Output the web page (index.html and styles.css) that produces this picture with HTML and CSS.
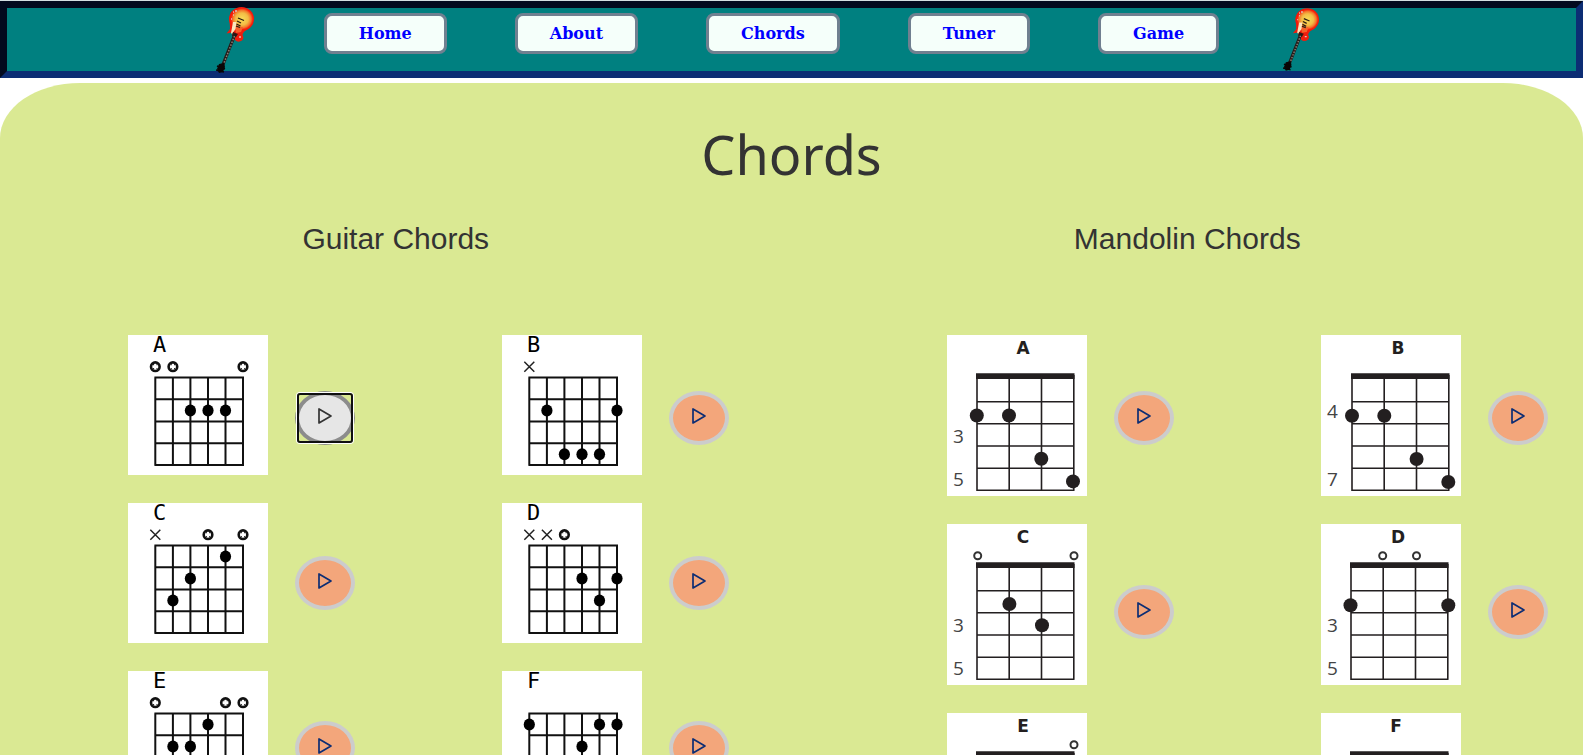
FILE: index.html
```html
<!DOCTYPE html>
<html lang="en">
<head>
<meta charset="utf-8">
<meta name="viewport" content="width=device-width, initial-scale=1">
<title>Chords</title>
<link rel="stylesheet" href="styles.css">
</head>
<body>
<svg class="defs" aria-hidden="true">
  <defs>
    <radialGradient id="burst" cx="0.52" cy="0.5" r="0.5">
      <stop offset="0" stop-color="#f8dc58"/>
      <stop offset="0.5" stop-color="#f2bc45"/>
      <stop offset="0.72" stop-color="#f47a2c"/>
      <stop offset="0.88" stop-color="#f81c0c"/>
      <stop offset="1" stop-color="#ee1808"/>
    </radialGradient>
    <symbol id="guitar" viewBox="0 0 38 66">
      <path d="M13.500 10 L14 22 L10.500 26.500 L16 25.500 Q16 28 18 29 L19 33 Q22 36 26 33.500 Q28.500 31 26.500 28 Q26.500 25 33 21 Z" fill="#f01c0c"/>
      <ellipse cx="25.500" cy="12" rx="12.500" ry="12" fill="url(#burst)"/>
      <path d="M19 20 L27 20 L25 25 L20 26 Z" fill="#f4612a"/>
      <path d="M17 15 L20.500 15 L19.500 22 L16 27 L15 26 Z" fill="#fbe6bd"/>
      <path d="M22 11 L28 13.500 M21 14 L25 16 M20.500 17 L24.500 19 M20 19 L24 20.500" stroke="#2a1a12" stroke-width="1.300"/>
      <path d="M17 25 L22 27 L20 30 L16 29 Z" fill="#3a1712"/>
      <path d="M19 27 L6 60" stroke="#251a18" stroke-width="3.200"/>
      <path d="M18.500 29 L8 56" stroke="#8b8178" stroke-width="1.500" stroke-dasharray="1.500 1.500"/>
      <path d="M3 57 L8 56 L9 60 L7 65 L3 66 L1 62 Z" fill="#0a0606"/>
      <path d="M1 59 L9 62 M0 63 L8 65" stroke="#0a0606" stroke-width="1.500"/>
      <path d="M17 5 h1 M19 4 h2 M17 8 h1 M15 12 h1 M23 30 h2" stroke="#d9c4bd" stroke-width="1.500"/>
    </symbol>
    <symbol id="play" viewBox="0 0 16 18">
      <path d="M2 2 V16 L14 9 Z" fill="none" stroke="currentColor" stroke-width="1.700" stroke-linejoin="round"/>
    </symbol>
    <symbol id="frets6" viewBox="0 0 140 140">
      <path d="M27.300 42.600V130M44.900 42.600V130M62.400 42.600V130M80 42.600V130M97.500 42.600V130M115 42.600V130M26.400 42.600H116M26.400 64.300H116M26.400 86.400H116M26.400 108.300H116M26.400 130H116" fill="none" stroke="#111" stroke-width="2"/>
    </symbol>
    <symbol id="frets4" viewBox="0 0 140 161">
      <path d="M29 38.300H127.500V44H29Z" fill="#231f20"/>
      <path d="M30 40V155.300M62.200 40V155.300M94.500 40V155.300M126.800 40V155.300M29.200 66.700H127.500M29.200 88.700H127.500M29.200 111H127.500M29.200 133.300H127.500M29.200 155.300H127.500" fill="none" stroke="#231f20" stroke-width="1.600"/>
    </symbol>
    <symbol id="open6" viewBox="0 0 12 12" overflow="visible"><circle cx="6" cy="6" r="4.300" fill="#fff" stroke="#111" stroke-width="2.600"/><path d="M3.800 4h1M7.200 4h1M3.800 8h1M7.200 8h1" stroke="#111" stroke-width="1.200"/></symbol>
    <symbol id="mute6" viewBox="0 0 12 12"><path d="M1 1 L11 11 M11 1 L1 11" stroke="#222" stroke-width="1.500"/></symbol>
  </defs>
</svg>

<header class="site-header">
  <nav class="nav" aria-label="Main">
    <svg class="guitar guitar-large" aria-hidden="true"><use href="#guitar"/></svg>
    <div class="links">
      <a class="nav-link" href="#home">Home</a>
      <a class="nav-link" href="#about">About</a>
      <a class="nav-link" href="#chords">Chords</a>
      <a class="nav-link" href="#tuner">Tuner</a>
      <a class="nav-link" href="#game">Game</a>
    </div>
    <svg class="guitar" aria-hidden="true"><use href="#guitar"/></svg>
  </nav>
</header>

<main class="content">
  <h1 class="title">Chords</h1>
  <div class="instruments">
    <section class="instrument">
      <h2 class="subtitle">Guitar Chords</h2>
      <div class="chords chords-guitar">
        <div class="set">
          <div class="charts">
            <svg class="chart" viewBox="0 0 140 140" role="img" aria-label="Guitar A chord">
              <text class="pixel-name" x="25" y="17">A</text><use href="#frets6" width="140" height="140"/>
              <use href="#open6" x="21.300" y="25.700" width="12" height="12"/><use href="#open6" x="38.900" y="25.700" width="12" height="12"/><use href="#open6" x="109" y="25.700" width="12" height="12"/>
              <ellipse cx="62.400" cy="75.400" rx="5.600" ry="6"/><ellipse cx="80" cy="75.400" rx="5.600" ry="6"/><ellipse cx="97.500" cy="75.400" rx="5.600" ry="6"/>
            </svg>
            <svg class="chart" viewBox="0 0 140 140" role="img" aria-label="Guitar C chord">
              <text class="pixel-name" x="25" y="17">C</text><use href="#frets6" width="140" height="140"/>
              <use href="#mute6" x="21.300" y="25.700" width="12" height="12"/><use href="#open6" x="74" y="25.700" width="12" height="12"/><use href="#open6" x="109" y="25.700" width="12" height="12"/>
              <ellipse cx="97.500" cy="53.400" rx="5.600" ry="6"/><ellipse cx="62.400" cy="75.400" rx="5.600" ry="6"/><ellipse cx="44.900" cy="97.400" rx="5.600" ry="6"/>
            </svg>
            <svg class="chart" viewBox="0 0 140 140" role="img" aria-label="Guitar E chord">
              <text class="pixel-name" x="25" y="17">E</text><use href="#frets6" width="140" height="140"/>
              <use href="#open6" x="21.300" y="25.700" width="12" height="12"/><use href="#open6" x="91.500" y="25.700" width="12" height="12"/><use href="#open6" x="109" y="25.700" width="12" height="12"/>
              <ellipse cx="80" cy="53.400" rx="5.600" ry="6"/><ellipse cx="44.900" cy="75.400" rx="5.600" ry="6"/><ellipse cx="62.400" cy="75.400" rx="5.600" ry="6"/>
            </svg>
          </div>
          <div class="players">
            <button class="play is-active" type="button" aria-label="Play guitar A"><svg class="play-icon"><use href="#play"/></svg></button>
            <button class="play" type="button" aria-label="Play guitar C"><svg class="play-icon"><use href="#play"/></svg></button>
            <button class="play" type="button" aria-label="Play guitar E"><svg class="play-icon"><use href="#play"/></svg></button>
          </div>
        </div>
        <div class="set">
          <div class="charts">
            <svg class="chart" viewBox="0 0 140 140" role="img" aria-label="Guitar B chord">
              <text class="pixel-name" x="25" y="17">B</text><use href="#frets6" width="140" height="140"/>
              <use href="#mute6" x="21.300" y="25.700" width="12" height="12"/>
              <ellipse cx="44.900" cy="75.400" rx="5.600" ry="6"/><ellipse cx="115" cy="75.400" rx="5.600" ry="6"/><ellipse cx="62.400" cy="119.300" rx="5.600" ry="6"/><ellipse cx="80" cy="119.300" rx="5.600" ry="6"/><ellipse cx="97.500" cy="119.300" rx="5.600" ry="6"/>
            </svg>
            <svg class="chart" viewBox="0 0 140 140" role="img" aria-label="Guitar D chord">
              <text class="pixel-name" x="25" y="17">D</text><use href="#frets6" width="140" height="140"/>
              <use href="#mute6" x="21.300" y="25.700" width="12" height="12"/><use href="#mute6" x="38.900" y="25.700" width="12" height="12"/><use href="#open6" x="56.400" y="25.700" width="12" height="12"/>
              <ellipse cx="80" cy="75.400" rx="5.600" ry="6"/><ellipse cx="115" cy="75.400" rx="5.600" ry="6"/><ellipse cx="97.500" cy="97.400" rx="5.600" ry="6"/>
            </svg>
            <svg class="chart" viewBox="0 0 140 140" role="img" aria-label="Guitar F chord">
              <text class="pixel-name" x="25" y="17">F</text><use href="#frets6" width="140" height="140"/>
              <ellipse cx="27.300" cy="53.400" rx="5.600" ry="6"/><ellipse cx="97.500" cy="53.400" rx="5.600" ry="6"/><ellipse cx="115" cy="53.400" rx="5.600" ry="6"/><ellipse cx="80" cy="75.400" rx="5.600" ry="6"/><ellipse cx="44.900" cy="97.400" rx="5.600" ry="6"/><ellipse cx="62.400" cy="97.400" rx="5.600" ry="6"/>
            </svg>
          </div>
          <div class="players">
            <button class="play" type="button" aria-label="Play guitar B"><svg class="play-icon"><use href="#play"/></svg></button>
            <button class="play" type="button" aria-label="Play guitar D"><svg class="play-icon"><use href="#play"/></svg></button>
            <button class="play" type="button" aria-label="Play guitar F"><svg class="play-icon"><use href="#play"/></svg></button>
          </div>
        </div>
      </div>
    </section>

    <section class="instrument">
      <h2 class="subtitle">Mandolin Chords</h2>
      <div class="chords chords-mandolin">
        <div class="set">
          <div class="charts">
            <svg class="chart chart-tall" viewBox="0 0 140 161" role="img" aria-label="Mandolin A chord">
              <text class="chord-name" x="76" y="19">A</text><use href="#frets4" width="140" height="161"/>
              <circle cx="29.800" cy="80.500" r="7"/><circle cx="62" cy="80.500" r="7"/><circle cx="94.300" cy="123.700" r="7"/><circle cx="126" cy="146.400" r="7"/>
              <text class="fret" x="6" y="108">3</text><text class="fret" x="6" y="151">5</text>
            </svg>
            <svg class="chart chart-tall" viewBox="0 0 140 161" role="img" aria-label="Mandolin C chord">
              <text class="chord-name" x="76" y="19">C</text><use href="#frets4" width="140" height="161"/>
              <circle class="open" cx="30.700" cy="31.700" r="3.500"/><circle class="open" cx="127" cy="31.700" r="3.500"/>
              <circle cx="62.400" cy="80" r="7"/><circle cx="95" cy="101.300" r="7"/>
              <text class="fret" x="6" y="108">3</text><text class="fret" x="6" y="151">5</text>
            </svg>
            <svg class="chart chart-tall" viewBox="0 0 140 161" role="img" aria-label="Mandolin E chord">
              <text class="chord-name" x="76" y="19">E</text><use href="#frets4" width="140" height="161"/>
              <circle class="open" cx="127" cy="31.700" r="3.500"/>
            </svg>
          </div>
          <div class="players">
            <button class="play" type="button" aria-label="Play mandolin A"><svg class="play-icon"><use href="#play"/></svg></button>
            <button class="play" type="button" aria-label="Play mandolin C"><svg class="play-icon"><use href="#play"/></svg></button>
            <button class="play" type="button" aria-label="Play mandolin E"><svg class="play-icon"><use href="#play"/></svg></button>
          </div>
        </div>
        <div class="set">
          <div class="charts">
            <svg class="chart chart-tall" viewBox="0 0 140 161" role="img" aria-label="Mandolin B chord">
              <text class="chord-name" x="77" y="19">B</text><use href="#frets4" x="1" width="140" height="161"/>
              <circle cx="31" cy="80.800" r="7"/><circle cx="63.300" cy="80.800" r="7"/><circle cx="95.600" cy="124" r="7"/><circle cx="127.300" cy="147" r="7"/>
              <text class="fret" x="6" y="83">4</text><text class="fret" x="6" y="151">7</text>
            </svg>
            <svg class="chart chart-tall" viewBox="0 0 140 161" role="img" aria-label="Mandolin D chord">
              <text class="chord-name" x="77" y="19">D</text><use href="#frets4" width="140" height="161"/>
              <circle class="open" cx="61.700" cy="31.700" r="3.500"/><circle class="open" cx="95.500" cy="31.700" r="3.500"/>
              <circle cx="29.500" cy="81.300" r="7"/><circle cx="127.300" cy="81.300" r="7"/>
              <text class="fret" x="6" y="108">3</text><text class="fret" x="6" y="151">5</text>
            </svg>
            <svg class="chart chart-tall" viewBox="0 0 140 161" role="img" aria-label="Mandolin F chord">
              <text class="chord-name" x="75" y="19">F</text><use href="#frets4" width="140" height="161"/>
            </svg>
          </div>
          <div class="players">
            <button class="play" type="button" aria-label="Play mandolin B"><svg class="play-icon"><use href="#play"/></svg></button>
            <button class="play" type="button" aria-label="Play mandolin D"><svg class="play-icon"><use href="#play"/></svg></button>
            <button class="play" type="button" aria-label="Play mandolin F"><svg class="play-icon"><use href="#play"/></svg></button>
          </div>
        </div>
      </div>
    </section>
  </div>
</main>
</body>
</html>
```
FILE: styles.css
```css
* {
  box-sizing: border-box;
}

body {
  display: flex;
  flex-direction: column;
  height: 100vh;
  margin: 0;
  border-top: 1px solid #d3dfe2;
  background: #fff;
  color: #333;
  font-family: "Liberation Sans", Arial, sans-serif;
}

.defs {
  position: absolute;
  width: 0;
  height: 0;
}

.site-header {
  flex: none;
  height: 77px;
  margin-bottom: 5px;
  border: 7px solid;
  border-color: #020a1e #0c2d74 #0c2d74 #020a1e;
  background: #008080;
}

.nav {
  display: flex;
  justify-content: center;
  align-items: flex-start;
  padding-right: 48px;
}

.links {
  display: flex;
  gap: 68px;
  padding: 5px 64px 0 70px;
}

.nav-link {
  padding: 6px 32px 5px;
  border: 3px solid slategray;
  border-radius: 8px;
  background: #f5fffa;
  color: #00f;
  font: bold 16px/24px Georgia, "DejaVu Serif", serif;
  text-decoration: none;
}

.guitar {
  flex: none;
  width: 36px;
  height: 63px;
}

.guitar-large {
  width: 38px;
  height: 66px;
  margin-top: -1px;
}

.content {
  flex: 1;
  min-height: 0;
  overflow-y: auto;
  scrollbar-width: none;
  border-radius: 80px 80px 0 0 / 55px 55px 0 0;
  background: #dae993;
}

.title {
  margin: 35px 0 0;
  font: 400 54px/72px "Noto Sans", sans-serif;
  text-align: center;
}

.instruments {
  display: grid;
  grid-template-columns: 1fr 1fr;
}

.subtitle {
  margin: 33px 0 80px;
  font-size: 30px;
  font-weight: 400;
  line-height: 32px;
  text-align: center;
}

.chords {
  display: grid;
}

.chords-guitar {
  grid-template-columns: 128fr 374fr 290fr;
}

.chords-mandolin {
  grid-template-columns: 155fr 374fr 262fr;
}

.chords .set:first-child {
  grid-column: 2;
}

.set {
  display: flex;
  gap: 27px;
}

.charts {
  display: flex;
  flex-direction: column;
  gap: 28px;
}

.chart {
  display: block;
  overflow: visible;
  width: 140px;
  height: 140px;
  background: #fff;
  fill: #000;
}

.chart-tall {
  height: 161px;
  fill: #231f20;
}

.pixel-name {
  font: 22px "DejaVu Sans Mono", monospace;
}

.chord-name {
  font: bold 17px "DejaVu Sans", sans-serif;
  text-anchor: middle;
}

.fret {
  font: 19px "Open Sans", sans-serif;
  fill: #444;
}

.open {
  fill: #fff;
  stroke: #333;
  stroke-width: 2px;
}

.players {
  display: flex;
  flex-direction: column;
  gap: 111px;
  padding-top: 56px;
}

.chords-mandolin .players {
  gap: 140px;
}

.play {
  position: relative;
  display: flex;
  flex: none;
  justify-content: center;
  align-items: center;
  width: 60px;
  height: 54px;
  padding: 0 0 4px;
  border: 4px solid #ccc;
  border-radius: 50%;
  background: #f3a67b;
  color: #0c2d74;
}

.play-icon {
  width: 16px;
  height: 18px;
}

.play.is-active {
  border-color: #8c8c8c;
  background: #e6e6e6;
  color: #333;
}

.play.is-active::after {
  content: "";
  position: absolute;
  inset: -2px;
  border: 2px solid #101010;
  border-radius: 3px;
  box-shadow: 0 0 0 1px #fff;
}
```
